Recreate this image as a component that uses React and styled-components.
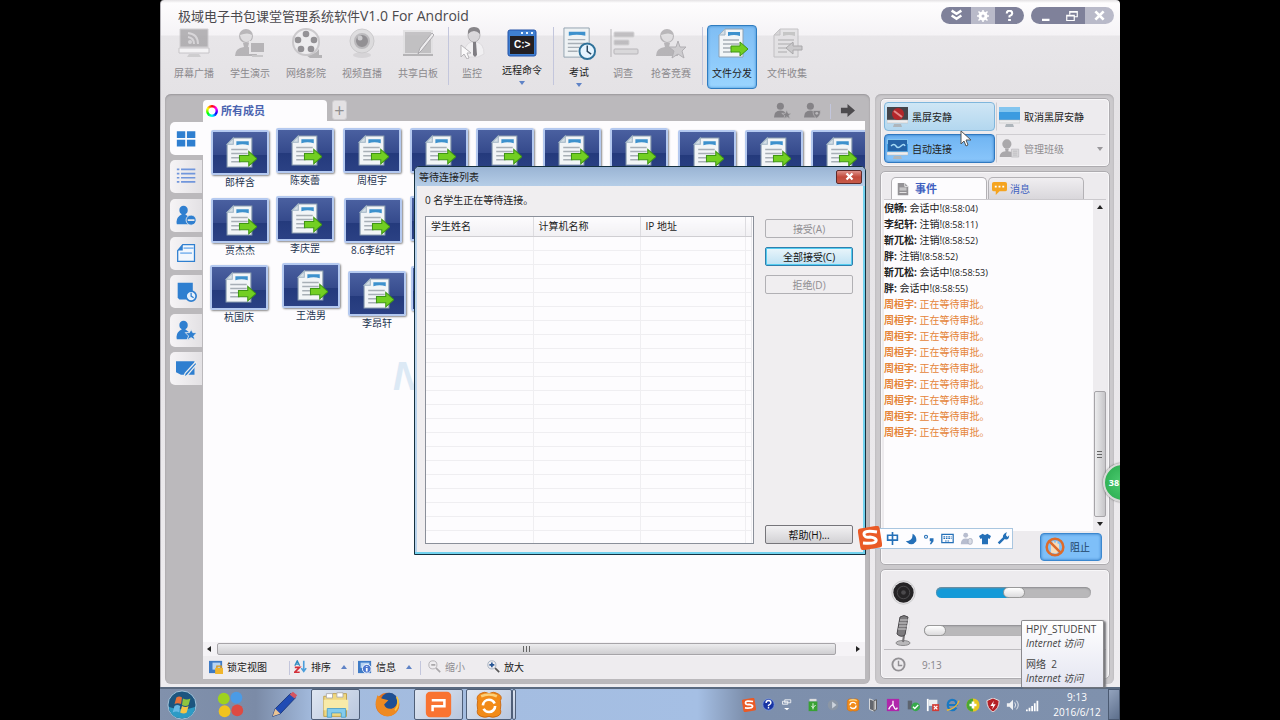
import React, { useState } from 'react';
import styled, { createGlobalStyle } from 'styled-components';

const GlobalStyle = createGlobalStyle`
  * {
    box-sizing: border-box;
  }

  body {
    margin: 0;
    background: #000;
    font-family: 'Open Sans', 'Noto Sans CJK SC', sans-serif;
    font-size: 10px;
    line-height: 14px;
    color: #222;
  }

  button {
    font: inherit;
    color: inherit;
    padding: 0;
    margin: 0;
    border: 0;
    background: none;
    white-space: nowrap;
  }

  svg {
    display: block;
    flex: none;
  }
`;

const Screen = styled.div`
  min-height: 100vh;
  display: flex;
  justify-content: center;
  background: #000;
`;

const Desktop = styled.div`
  position: relative;
  width: 75%;
  min-width: 940px;
  display: flex;
  flex-direction: column;
  overflow: hidden;
`;

const AppWindow = styled.div`
  flex: 1;
  display: flex;
  flex-direction: column;
  padding: 0 6px 3px 4px;
  background: linear-gradient(#e4e2e4 0, #fefdfe 3px, #f5f3f6 35px, #e8e6e9 36px, #e4e2e5 94px, #efedf0 100%);
  border-left: 1px solid #b5b3b8;
  border-radius: 4px 4px 0 0;
`;

const TitleBar = styled.header`
  display: flex;
  align-items: center;
  height: 25px;
  padding: 6px 0 0 13px;
`;

const Title = styled.h1`
  flex: 1;
  margin: 0;
  font-size: 13px;
  font-weight: 400;
  line-height: 18px;
  color: #4b494d;
`;

const TitleLatin = styled.span`
  font-size: 14px;
`;

const Pill = styled.div`
  display: flex;
  height: 17px;
  margin-left: 7px;
  border-radius: 9px;
  overflow: hidden;
`;

const PillButton = styled.button`
  display: flex;
  align-items: center;
  justify-content: center;
  width: ${(p) => p.$width || 28}px;
  background: ${(p) => (p.$light ? '#b9bac9' : '#7f819a')};
`;

const Toolbar = styled.nav`
  display: flex;
  height: 64px;
  margin-bottom: 5px;
  padding-left: 1px;
`;

const ToolButton = styled.button`
  display: flex;
  flex-direction: column;
  align-items: center;
  width: ${(p) => p.$width || 56}px;
  padding-top: 1px;
  gap: ${(p) => (p.$menu ? 4 : 7)}px;
  color: ${(p) => (p.$enabled ? '#222' : '#8b898d')};
  border: 1px solid ${(p) => (p.$selected ? '#2f7cc0' : 'transparent')};
  border-radius: 4px;
  background: ${(p) => (p.$selected ? 'linear-gradient(#7fbdf3, #8fcbfb 60%, #9ad5ff)' : 'none')};
  box-shadow: ${(p) => (p.$selected ? 'inset 0 0 3px #3c8ad0' : 'none')};

  svg {
    opacity: ${(p) => (p.$enabled ? 1 : 0.8)};
  }
`;

const Caret = styled.span`
  border: 3px solid transparent;
  ${(p) => (p.$up ? 'border-bottom' : 'border-top')}: 4px solid ${(p) => p.$color || '#5f83c6'};
  ${(p) => (p.$up ? 'border-top' : 'border-bottom')}: 0;
`;

const Separator = styled.span`
  width: 1px;
  height: ${(p) => p.$height || 58}px;
  margin: 2px ${(p) => p.$gap || 0}px 0;
  background: #c3c6dc;
`;

const Body = styled.main`
  flex: 1;
  display: flex;
  gap: 5px;
`;

const LeftPanel = styled.section`
  flex: 1;
  min-width: 0;
  display: flex;
  flex-direction: column;
  padding: 0 5px 5px;
  border-radius: 6px;
  background: #bbb9bc;
  box-shadow: inset 0 1px 2px #98969a;
`;

const TabStrip = styled.div`
  display: flex;
  align-items: flex-end;
  height: 27px;
  padding: 0 10px 0 33px;
`;

const MembersTab = styled.button`
  display: flex;
  align-items: center;
  gap: 3px;
  width: 124px;
  height: 21px;
  padding-left: 3px;
  font-size: 11px;
  font-weight: 700;
  color: #4a63b0;
  background: #fdfcfe;
  border-radius: 4px 4px 0 0;
`;

const ColorRing = styled.span`
  width: 12px;
  height: 12px;
  border-radius: 50%;
  background: radial-gradient(#fff 0 3px, transparent 4px), conic-gradient(red, #f0f, blue, cyan, lime, yellow, red);
`;

const AddTab = styled.button`
  width: 15px;
  height: 20px;
  margin: 0 auto 1px 5px;
  font-size: 18px;
  line-height: 18px;
  color: #8f8e90;
  background: #e3e1e3;
  border: 1px solid #cfcdd0;
  border-radius: 3px;
`;

const StripTools = styled.div`
  display: flex;
  align-items: center;
  gap: 9px;
  height: 22px;
`;

const StripPeople = styled.div`
  display: flex;
  gap: 13px;
`;

const PanelMain = styled.div`
  flex: 1;
  display: flex;
`;

const SideTabs = styled.div`
  display: flex;
  flex-direction: column;
  justify-content: space-between;
  width: 33px;
  height: 264px;
  padding-top: 1px;
`;

const SideTab = styled.button`
  display: flex;
  align-items: center;
  justify-content: center;
  height: 33px;
  margin-right: ${(p) => (p.$active ? 0 : 1)}px;
  border-radius: 5px 0 0 5px;
  background: ${(p) => (p.$active ? '#fdfcfe' : 'linear-gradient(90deg, #f6f4f6, #e3e1e4)')};
`;

const PanelContent = styled.div`
  flex: 1;
  min-width: 0;
  display: flex;
  flex-direction: column;
`;

const Canvas = styled.div`
  flex: 1;
  position: relative;
  overflow: hidden;
  background: #fdfcfe;
`;

const Watermark = styled.div`
  position: absolute;
  left: 190px;
  top: 230px;
  font: italic 900 40px/50px 'Liberation Sans', sans-serif;
  color: #dce9f5;
`;

const Student = styled.figure`
  position: absolute;
  left: ${(p) => p.$x}px;
  top: ${(p) => p.$y}px;
  width: 58px;
  margin: 0;
  text-align: center;
  color: #1d3450;
`;

const Thumb = styled.div`
  display: flex;
  align-items: center;
  justify-content: center;
  height: 45px;
  border: 2px solid #b4c9f0;
  border-radius: 2px;
  background: linear-gradient(#4a60a0, #354a8c 55%, #243a7c 56%, #2b4184);
  box-shadow: 1px 1px 2px #888;
`;

const HScroll = styled.div`
  display: flex;
  align-items: center;
  justify-content: space-between;
  height: 14px;
  padding: 0 5px 0 4px;
  background: #f5f3f6;
`;

const HThumb = styled.div`
  flex: 1;
  display: flex;
  align-items: center;
  justify-content: center;
  gap: 2px;
  height: 12px;
  margin: 0 20px 0 6px;
  border: 1px solid #a6a4a8;
  border-radius: 2px;
  background: linear-gradient(#ececee, #cfced1);

  i {
    width: 1px;
    height: 6px;
    background: #666;
  }
`;

const ArrowSide = styled.span`
  border: 3px solid transparent;
  ${(p) => (p.$left ? 'border-right' : 'border-left')}: 4px solid #222;
  ${(p) => (p.$left ? 'border-left' : 'border-right')}: 0;
`;

const ViewBar = styled.div`
  display: flex;
  align-items: center;
  height: 23px;
  padding: 0 0 2px 6px;
  background: #eeecef;
`;

const ViewButton = styled.button`
  display: flex;
  align-items: center;
  gap: 4px;
  width: ${(p) => p.$width}px;
  color: ${(p) => (p.disabled ? '#8f8d91' : '#222')};

  ${Caret} {
    margin-left: 6px;
  }
`;

const RightPanel = styled.aside`
  width: 239px;
  display: flex;
  flex-direction: column;
  gap: 4px;
  padding: 4px 4px 5px 5px;
  border-radius: 6px;
  background: #cbc9cc;
  box-shadow: inset 0 1px 2px #aaa8ac;
`;

const Card = styled.div`
  border: 1px solid #aeacb0;
  border-radius: 5px;
  background: ${(p) => p.$bg || '#edebee'};
  box-shadow: inset 0 0 0 1px #f8f7f9;
`;

const QuickGrid = styled(Card)`
  display: grid;
  grid-template-columns: 111px 1fr;
  gap: 3px 1px;
  height: 69px;
  padding: 3px;
`;

const quickBackgrounds = {
  hover: 'linear-gradient(#cfe6f5, #b3d7ef)',
  active: 'linear-gradient(#6fb4f2, #8ac6fb)',
};

const QuickButton = styled.button`
  display: flex;
  align-items: center;
  gap: 4px;
  padding-left: 2px;
  color: ${(p) => (p.disabled ? '#8f8d91' : '#222')};
  border: 1px solid ${(p) => (p.$tone === 'active' ? '#2f78c0' : p.$tone ? '#7fb6dc' : 'transparent')};
  border-radius: 4px;
  background: ${(p) => quickBackgrounds[p.$tone] || 'none'};
  box-shadow: ${(p) => (p.$tone === 'active' ? 'inset 0 0 3px #2f78c0' : 'none')};

  &:nth-child(even) {
    border-left-color: #cfcdd1;
    border-radius: 0;
  }

  &:nth-child(4) {
    border-top-color: #cfcdd1;
  }

  ${Caret} {
    margin: 0 2px 0 auto;
  }
`;

const EventCard = styled(Card)`
  flex: 1;
  display: flex;
  flex-direction: column;
  padding: 5px 3px 3px;
`;

const EventTabs = styled.div`
  display: flex;
  gap: 1px;
  padding-left: 7px;
  border-bottom: 1px solid #cbc9cd;
`;

const EventTab = styled.button`
  display: flex;
  align-items: center;
  gap: ${(p) => (p.$active ? 5 : 3)}px;
  width: 96px;
  height: 22px;
  padding-left: ${(p) => (p.$active ? 4 : 3)}px;
  font-size: ${(p) => (p.$active ? 11 : 10)}px;
  font-weight: ${(p) => (p.$active ? 700 : 400)};
  color: #405fc0;
  border: 1px solid #b3b1b5;
  border-bottom: 0;
  border-radius: 5px 5px 0 0;
  background: ${(p) => (p.$active ? '#fdfcfe' : 'linear-gradient(#f0eef1, #d9d7db)')};
`;

const LogArea = styled.div`
  flex: 1;
  display: flex;
  background: #fdfcfe;
`;

const Log = styled.ul`
  flex: 1;
  margin: 0;
  padding: 0;
  list-style: none;
`;

const LogLine = styled.li`
  height: 16px;
  line-height: 16px;
  white-space: nowrap;
  color: ${(p) => (p.$waiting ? '#e5853a' : '#222')};

  b {
    font-weight: 700;
  }

  time {
    font-size: 9px;
    line-height: 9px;
  }
`;

const VScroll = styled.div`
  display: flex;
  flex-direction: column;
  align-items: center;
  width: 13px;
  padding: 5px 0;
  background: #eeecef;
`;

const VThumb = styled.div`
  display: flex;
  flex-direction: column;
  align-items: center;
  justify-content: center;
  gap: 2px;
  width: 12px;
  height: 126px;
  margin: auto 0 5px;
  border: 1px solid #a6a4a8;
  border-radius: 2px;
  background: linear-gradient(90deg, #ececee, #c6c5c8);

  i {
    width: 5px;
    height: 1px;
    background: #666;
  }
`;

const BlockRow = styled.div`
  display: flex;
  justify-content: flex-end;
  height: 30px;
  padding: 2px 4px 0 0;
`;

const BlockButton = styled.button`
  display: flex;
  align-items: center;
  gap: 5px;
  width: 62px;
  padding-left: 4px;
  color: #1e4466;
  border: 1px solid #3b87cf;
  border-radius: 4px;
  background: #7ebff8;
  box-shadow: inset 0 0 3px #2f78c0;
`;

const AudioCard = styled(Card)`
  height: 110px;
  padding: 3px 3px 0;
`;

const AudioRow = styled.label`
  display: flex;
  align-items: center;
  gap: ${(p) => p.$gap}px;
  height: 38px;
  padding: 0 15px 0 7px;
`;

const Slider = styled.input`
  flex: 1;
  min-width: 0;
  appearance: none;
  height: 11px;
  margin: 0;
  border-radius: 6px;
  box-shadow: inset 0 1px 2px #8a8a8d;

  &::-webkit-slider-thumb {
    appearance: none;
    width: 22px;
    height: 11px;
    border: 1px solid #999;
    border-radius: 6px;
    background: linear-gradient(#fff, #dcdbdd);
  }
`;

const ClockRow = styled.div`
  display: flex;
  align-items: center;
  gap: 16px;
  height: 30px;
  padding-left: 7px;
  color: #88868a;
  border-top: 1px solid #bebcc0;
`;

const Dialog = styled.section`
  position: absolute;
  left: 254px;
  top: 166px;
  width: 452px;
  border: 1px solid #14303f;
  border-radius: 5px 5px 0 0;
  background: #f0eef0;
  box-shadow: inset -2px -2px 0 #72d2ee, inset 2px 0 0 #b9d3ec;
`;

const DialogTitle = styled.header`
  display: flex;
  align-items: center;
  justify-content: space-between;
  height: 19px;
  padding: 0 3px 0 4px;
  border-radius: 4px 4px 0 0;
  background: linear-gradient(#9ab4d4, #b5cde7);

  h2 {
    margin: 0;
    font-size: 10px;
    font-weight: 400;
  }
`;

const CloseButton = styled.button`
  display: flex;
  align-items: center;
  justify-content: center;
  width: 26px;
  height: 14px;
  border: 1px solid #5e2a2a;
  border-radius: 2px;
  background: linear-gradient(#dd9088, #c24a3c 50%, #c75a48);
`;

const DialogBody = styled.div`
  display: grid;
  grid-template-columns: 329px 88px;
  gap: 9px 11px;
  padding: 7px 10px 10px;
`;

const Waiting = styled.p`
  grid-column: 1 / 3;
  margin: 0;
`;

const TableFrame = styled.div`
  height: 328px;
  overflow: hidden;
  border: 1px solid #8a8f99;
  background: #fdfcfe;
`;

const WaitTable = styled.table`
  width: 326px;
  table-layout: fixed;
  border-collapse: collapse;

  th {
    height: 19px;
    padding: 0 5px;
    font-weight: 400;
    text-align: left;
    border-right: 1px solid #dddce0;
    border-bottom: 1px solid #cfced2;
    background: linear-gradient(#fdfcfe, #f1f0f3);
  }

  td {
    height: 14px;
    padding: 0;
    border-right: 1px solid #efeef1;
    border-bottom: 1px solid #efeef1;
  }
`;

const DialogButtons = styled.div`
  display: flex;
  flex-direction: column;
  gap: 9px;
  padding-top: 3px;
`;

const DialogButton = styled.button`
  height: 19px;
  color: ${(p) => (p.disabled ? '#8f8d91' : '#111')};
  border: 1px solid ${(p) => (p.$focus ? '#2f7fae' : p.disabled ? '#b1b0b4' : '#76757a')};
  border-radius: 2px;
  background: ${(p) =>
    p.disabled ? '#f0eef0' : p.$focus ? 'linear-gradient(#eaf5fb, #bfe2f3)' : 'linear-gradient(#f2f1f3, #d2d1d4)'};
  box-shadow: ${(p) => (p.$focus ? 'inset 0 0 0 1px #55cdf0' : 'none')};

  &:last-child {
    margin-top: auto;
  }
`;

const ImeBar = styled.div`
  position: absolute;
  left: 712px;
  top: 528px;
  display: flex;
  align-items: center;
  gap: 6px;
  width: 141px;
  height: 21px;
  padding-left: 13px;
  border: 1px solid #a9c6e0;
  background: #fdfdff;
`;

const ImeLogo = styled.div`
  position: absolute;
  left: -15px;
  top: -3px;
`;

const SpeedBall = styled.button`
  position: absolute;
  right: -22px;
  top: 463px;
  width: 39px;
  height: 39px;
  padding-right: 17px;
  font-size: 9px;
  font-weight: 700;
  color: #fff;
  border: 2px solid #d9d9d9;
  border-radius: 50%;
  background: radial-gradient(#4ccb70, #28a94c);
  box-shadow: 0 0 2px #555;
`;

const Pointer = styled.svg`
  position: absolute;
  left: 800px;
  top: 130px;
`;

const NetworkTip = styled.div`
  position: absolute;
  right: 16px;
  bottom: 33px;
  width: 83px;
  height: 67px;
  padding: 1px 4px 0;
  color: #444;
  border: 1px solid #8a898d;
  border-bottom: 0;
  border-radius: 2px 2px 0 0;
  background: linear-gradient(#fff, #e4e5f1);
  box-shadow: 2px 1px 2px #77777a;

  p {
    margin: 0 0 7px;
    white-space: nowrap;
  }
`;

const Taskbar = styled.footer`
  display: flex;
  align-items: center;
  height: 33px;
  border-top: 2px solid #5a6a80;
  background: linear-gradient(90deg, #8191ac, #7b8ba7 10%, #a3bbde 16%, #a5bfe4 56%, #7d8fac 61%, #7f91ad);
`;

const TaskButton = styled.button`
  display: flex;
  align-items: center;
  justify-content: center;
  width: ${(p) => p.$width || 51}px;
  height: 31px;
  border: 1px solid ${(p) => (p.$open ? '#4f5f78' : 'transparent')};
  border-radius: 2px;
  background: ${(p) => (p.$open ? 'linear-gradient(135deg, #dfe6f1, #b9c7de)' : 'none')};
`;

const Tray = styled.div`
  display: flex;
  align-items: center;
  gap: 6px;
  margin-left: auto;
`;

const TrayGap = styled.span`
  width: ${(p) => p.$width}px;
`;

const TrayClock = styled.div`
  width: 58px;
  margin: 0 -4px 0 2px;
  font-size: 10px;
  line-height: 15px;
  text-align: center;
  color: #fff;
`;

const ShowDesktop = styled.button`
  width: 12px;
  height: 31px;
  border: 1px solid #4b5a72;
  background: linear-gradient(135deg, #93a3bd, #5d6f8c);
`;

const Svg = ({ size = 32, w, h, box = 32, children }) => (
  <svg width={w || size} height={h || size} viewBox={`0 0 ${box} ${box}`} fill="none" aria-hidden="true">
    {children}
  </svg>
);

const DocShape = ({ gray }) => (
  <>
    <path d="M3 8 9 2H27V30H3Z" fill={gray ? '#e2e1e3' : '#f2f5f7'} stroke={gray ? '#b8b7ba' : '#8da0b2'} />
    <path d="M3 8 9 2V8Z" fill={gray ? '#cfced0' : '#d5dfe6'} stroke={gray ? '#b8b7ba' : '#a0b4c4'} />
    <path d="M12 5h12v4q-6-2-12 0z" fill={gray ? '#bbb' : '#3d91cd'} />
    <path d="M7 13h16M7 17h16M7 21h12M7 25h9" stroke={gray ? '#b5b4b6' : '#a7afb6'} strokeWidth="1.4" />
  </>
);

const SendIcon = ({ size }) => (
  <Svg size={size}>
    <DocShape />
    <path d="M15 19h9v-4l8 7-8 7v-4h-9z" fill="#72cf22" stroke="#3f9614" />
  </Svg>
);

const CollectIcon = () => (
  <Svg>
    <DocShape gray />
    <path d="M31 19h-9v-4l-7 6 7 6v-4h9z" fill="#c4c3c5" stroke="#9b9a9c" />
  </Svg>
);

const BroadcastIcon = () => (
  <Svg>
    <path d="M2 2h28v18H2z" fill="#a6a4a7" stroke="#cac8cb" />
    <path d="M1 21h30v5H1z" fill="#f8f7f9" stroke="#c0bec1" />
    <path d="M11 27h10l2 3H9z" fill="#c9c8ca" />
    <path d="M10 6q10 1 10 11M10 10q6 1 6 7" stroke="#d3d1d4" strokeWidth="2" />
    <circle cx="12" cy="15" r="2" fill="#d3d1d4" />
  </Svg>
);

const PersonShape = ({ fill = '#aaa8ab' }) => (
  <>
    <path d="M1 29q0-8 9-9l-1-4h6l-1 4q9 1 9 9z" fill={fill} />
    <circle cx="12" cy="9" r="7" fill={fill} />
  </>
);

const DemoIcon = () => (
  <Svg>
    <PersonShape />
    <path d="M6 8q8-3 12 0 0 7-6 7-5-1-6-7" fill="#dddcde" />
    <path d="M16 15h15v11H16z" fill="#aaa8ab" stroke="#e7e6e8" strokeWidth="2" />
    <path d="M18 29h11" stroke="#c1c0c2" strokeWidth="2" />
  </Svg>
);

const FilmIcon = () => (
  <Svg>
    <path d="M16 28q9 0 13-6v6h3v3H20z" fill="#a9a8aa" />
    <circle cx="16" cy="15" r="13" fill="#efeef0" stroke="#c3c1c4" strokeWidth="2" />
    <g fill="#7e7c80">
      <circle cx="16" cy="7" r="3.3" />
      <circle cx="8" cy="13" r="3.3" />
      <circle cx="24" cy="13" r="3.3" />
      <circle cx="11" cy="22" r="3.3" />
      <circle cx="21" cy="22" r="3.3" />
    </g>
  </Svg>
);

const CamIcon = () => (
  <Svg>
    <ellipse cx="16" cy="28" rx="9" ry="3" fill="#d3d1d4" />
    <circle cx="16" cy="14" r="12" fill="#dad9db" stroke="#c5c4c6" />
    <circle cx="16" cy="14" r="7" fill="#7d7b7f" stroke="#b0afb2" strokeWidth="2" />
    <circle cx="14" cy="11" r="2.5" fill="#c7c6c9" />
  </Svg>
);

const BoardIcon = () => (
  <Svg>
    <path d="M2 4h28v23H2z" fill="#b8b7b9" stroke="#e0dfe1" strokeWidth="2" />
    <path d="M1 28h30" stroke="#a9a8aa" strokeWidth="2" />
    <path d="M16 27l2-6L30 6l2 2-12 15z" fill="#efeef0" stroke="#9d9b9f" />
  </Svg>
);

const MonitorIcon = () => (
  <Svg>
    <path d="M8 30q0-13 7-15h6q7 2 7 12l-6 3z" fill="#f4f3f5" stroke="#dcdadd" />
    <ellipse cx="18" cy="8" rx="6" ry="7" fill="#d5d3d6" stroke="#a9a7ab" />
    <path d="M12 7q-1-7 6-7t6 7q-3-3-6-3t-6 3" fill="#6d6b6f" />
    <path d="M17 15h3l1 13-2 2-2-2z" fill="#67656a" />
    <path d="M5 18v12l3-3 3 5 2-1-2-5h4z" fill="#fff" stroke="#aaa8ac" />
  </Svg>
);

const CommandIcon = () => (
  <Svg>
    <rect x="2" y="3" width="28" height="26" rx="2" fill="#3f7fd0" stroke="#2452a8" />
    <path d="M4 9h24v18H4z" fill="#231f22" />
    <path d="M15 6h2M20 6h2M25 6h2" stroke="#e8f4ff" strokeWidth="2" />
    <text x="8" y="21" fontSize="10" fontWeight="700" fontFamily="Liberation Sans, sans-serif" fill="#fff">C:&gt;</text>
  </Svg>
);

const ExamIcon = () => (
  <svg width="34" height="34" viewBox="0 0 35 35" fill="none" aria-hidden="true">
    <path d="M2 1h26v30H2z" fill="#eef2f4" stroke="#93a3af" />
    <path d="M7 5h17v4q-9-2-17 0z" fill="#3d91cd" />
    <path d="M6 13h18M6 17h18M6 21h12M6 25h10" stroke="#a7afb6" strokeWidth="1.4" />
    <circle cx="26" cy="25" r="8" fill="#e5f4ff" stroke="#2e7199" strokeWidth="2" />
    <path d="M26 19v6l4 3" stroke="#2c4860" strokeWidth="1.5" />
  </svg>
);

const SurveyIcon = () => (
  <Svg>
    <path d="M4 2v28" stroke="#aaa8ab" />
    <g fill="#b5b3b6" stroke="#cfced0">
      <rect x="7" y="5" width="20" height="5" rx="1" />
      <rect x="7" y="13" width="15" height="5" rx="1" />
      <rect x="7" y="22" width="24" height="5" rx="1" fill="#d6d5d7" stroke="#adabaf" />
    </g>
  </Svg>
);

const QuizIcon = () => (
  <Svg>
    <PersonShape />
    <path d="M6 8q8-3 12 0 0 7-6 7-5-1-6-7" fill="#dddcde" />
    <path d="m23 14 2 6h6l-4 4 2 7-6-4-6 4 2-7-5-4h7z" fill="#c8c7ca" stroke="#a4a2a6" />
  </Svg>
);

const ScreenIcon = ({ kind }) => (
  <svg width="21" height="22" viewBox="0 0 21 22" aria-hidden="true">
    <path d="M0 1h21v13H0z" fill={kind === 'black' ? '#44444a' : '#3c9be0'} />
    {kind !== 'black' && <path d="M0 1h21v5H0z" fill="#83c5ef" />}
    <path d="M0 14h21v3H0z" fill="#eeeef0" stroke="#bbb" strokeWidth=".5" />
    <path d="M7 18h7l1 3H6z" fill="#aeb5bb" />
    {kind === 'black' && <circle cx="11" cy="8" r="6" fill="#b2262a" />}
    {kind === 'black' && <path d="m7 5 8 6" stroke="#e28a8a" strokeWidth="2" />}
    {kind === 'auto' && <path d="M1 2h19v11H1z" fill="#2564a8" />}
    {kind === 'auto' && <path d="M4 8q3-3 5 0t5 0 4 0" fill="none" stroke="#a5daf5" strokeWidth="1.5" />}
  </svg>
);

const SmallPerson = ({ fill, badge }) => (
  <Svg size={17} box={24}>
    <circle cx="9" cy="6" r="5" fill={fill} />
    <path d="M0 22q0-10 9-10t9 10z" fill={fill} />
    {badge === 'star' && <path d="m18 11 2 5h5l-4 3 2 5-5-3-4 3 1-5-4-3h5z" fill={fill} stroke="#bbb9bc" />}
    {badge === 'shield' && <path d="M18 23q-6-4-5-11h10q1 7-5 11" fill={fill} stroke="#bbb9bc" />}
    {badge === 'shield' && <circle cx="18" cy="16" r="2" fill="#bbb9bc" />}
  </Svg>
);

const BLUE = '#2f7fd0';

const sideIcons = {
  grid: <path d="M1 4h10v8H1zM13 4h10v8H13zM1 14h10v8H1zM13 14h10v8H13z" fill={BLUE} />,
  list: (
    <path
      d="M1 4h3M1 9h3M1 14h3M1 19h3M6 4h17M6 9h17M6 14h17M6 19h17"
      stroke="#7196dc"
      strokeWidth="2"
    />
  ),
  userMinus: (
    <>
      <path d="M4 6a5 5 0 1 1 10 0q0 4-3 5l5 4v8H1q-2-8 6-12-3-1-3-5" fill={BLUE} />
      <circle cx="18" cy="18" r="6" fill={BLUE} stroke="#eee" />
      <path d="M14 18h8" stroke="#eee" strokeWidth="2" />
    </>
  ),
  doc: (
    <>
      <path d="M2 9 8 2h14v20H2z" fill="#f2f7fd" stroke={BLUE} strokeWidth="1.5" />
      <path d="M2 9 8 2v7z" fill={BLUE} />
      <path d="M9 6h12M5 12h14" stroke="#8abcf0" strokeWidth="2" />
    </>
  ),
  bookClock: (
    <>
      <path d="M2 2h18v20H4l-2-2z" fill={BLUE} />
      <circle cx="18" cy="18" r="6" fill="#e8f1fb" stroke={BLUE} strokeWidth="2" />
      <path d="M18 14v4l3 2" stroke={BLUE} strokeWidth="1.5" />
    </>
  ),
  userStar: (
    <>
      <path d="M4 6a5 5 0 1 1 10 0q0 4-3 5l5 4v8H1q-2-8 6-12-3-1-3-5" fill={BLUE} />
      <path d="m18 11 2 4h5l-4 4 2 5-5-3-5 3 2-5-4-4h5z" fill={BLUE} stroke="#eee" />
    </>
  ),
  pen: (
    <>
      <path d="M0 4h22v16H6l-6-3z" fill={BLUE} />
      <path d="m9 23 2-5L23 5l2 2-12 14z" fill={BLUE} stroke="#eee" strokeWidth="1.5" />
    </>
  ),
};

const SogouIcon = ({ size }) => (
  <Svg size={size} box={24}>
    <rect x="1" y="1" width="22" height="22" rx="3" fill="#ea5a26" transform="rotate(-9 12 12)" />
    <path d="M19 6q-13-2-13 2t6 3q7 1 6 4t-13 2" stroke="#fff" strokeWidth="3" />
  </Svg>
);

const OrangeIcon = ({ size }) => (
  <Svg size={size}>
    <path
      d="M6 3q5-3 10 0 5-3 10 0 6 3 3 8 1 5 0 10 2 6-4 8-5 2-9 0-5 2-9 0-6-2-4-8-1-5 0-10-2-5 3-8"
      fill="#f28b18"
      stroke="#c9650c"
    />
    <path d="M7 6q9-4 18 0" stroke="#fbd07a" strokeWidth="3" />
    <circle cx="16" cy="17" r="7" stroke="#fff" strokeWidth="3" strokeDasharray="18 4" />
  </Svg>
);

const tools = [
  { label: '屏幕广播', icon: <BroadcastIcon /> },
  { label: '学生演示', icon: <DemoIcon /> },
  { label: '网络影院', icon: <FilmIcon /> },
  { label: '视频直播', icon: <CamIcon /> },
  { label: '共享白板', icon: <BoardIcon />, sep: 2 },
  { label: '监控', icon: <MonitorIcon />, width: 42 },
  { label: '远程命令', icon: <CommandIcon />, width: 58, menu: true, enabled: true, sep: 2 },
  { label: '考试', icon: <ExamIcon />, width: 46, menu: true, enabled: true },
  { label: '调查', icon: <SurveyIcon />, width: 42 },
  { label: '抢答竞赛', icon: <QuizIcon />, width: 54, sep: 4 },
  { label: '文件分发', icon: <SendIcon />, width: 50, enabled: true, selected: true },
  { label: '文件收集', icon: <CollectIcon />, width: 60 },
];

const students = [
  { name: '郎梓含', x: 8, y: 9 },
  { name: '陈奕蕾', x: 73, y: 7 },
  { name: '周桓宇', x: 140, y: 7 },
  { name: '', x: 207, y: 7 },
  { name: '', x: 273, y: 7 },
  { name: '', x: 340, y: 7 },
  { name: '', x: 407, y: 7 },
  { name: '', x: 475, y: 9 },
  { name: '', x: 542, y: 9 },
  { name: '', x: 608, y: 9 },
  { name: '贾杰杰', x: 8, y: 77 },
  { name: '李庆罡', x: 73, y: 75 },
  { name: '8.6李纪轩', x: 141, y: 77 },
  { name: '', x: 207, y: 75 },
  { name: '杭国庆', x: 7, y: 144 },
  { name: '王浩男', x: 79, y: 142 },
  { name: '李昂轩', x: 145, y: 150 },
  { name: '', x: 208, y: 145 },
];

const events = [
  { name: '倪畅', text: '会话中!', time: '(8:58:04)' },
  { name: '李纪轩', text: '注销!', time: '(8:58:11)' },
  { name: '靳兀松', text: '注销!', time: '(8:58:52)' },
  { name: '胖', text: '注销!', time: '(8:58:52)' },
  { name: '靳兀松', text: '会话中!', time: '(8:58:53)' },
  { name: '胖', text: '会话中!', time: '(8:58:55)' },
  ...Array.from({ length: 9 }, () => ({ name: '周桓宇', text: '正在等待审批。', waiting: true })),
];

const sliderFill = (value) => ({
  background: `linear-gradient(90deg, #149ad8 ${value}%, #b9b8ba ${value}%)`,
});

const Header = () => (
  <TitleBar>
    <Title>
      极域电子书包课堂管理系统软件<TitleLatin>V1.0 For Android</TitleLatin>
    </Title>
    <Pill>
      <PillButton $width={30} aria-label="收起">
        <Svg size={13} box={16}>
          <path d="m2 2 6 4 6-4M2 8l6 4 6-4" stroke="#fff" strokeWidth="3" />
        </Svg>
      </PillButton>
      <PillButton $width={24} $light aria-label="设置">
        <Svg size={12} box={16}>
          <circle cx="8" cy="8" r="4" stroke="#fff" strokeWidth="4" />
          <path d="M8 0v16M0 8h16M2 2l12 12M14 2 2 14" stroke="#fff" strokeWidth="2" />
          <circle cx="8" cy="8" r="2" fill="#b9bac9" />
        </Svg>
      </PillButton>
      <PillButton $width={29} aria-label="帮助">
        <Svg size={11} box={16}>
          <path d="M4 5q0-4 4-4t4 4q0 2-4 4v2" stroke="#fff" strokeWidth="3" />
          <path d="M6 13h4v3H6z" fill="#fff" />
        </Svg>
      </PillButton>
    </Pill>
    <Pill>
      <PillButton aria-label="最小化">
        <Svg size={12} box={16}>
          <path d="M4 13h10" stroke="#fff" strokeWidth="3" />
        </Svg>
      </PillButton>
      <PillButton $width={26} aria-label="还原">
        <Svg size={12} box={16}>
          <path d="M5 6V2h10v7h-4M1 7h10v7H1zM1 8h10M5 3h10" stroke="#fff" strokeWidth="1.6" />
        </Svg>
      </PillButton>
      <PillButton $width={29} $light aria-label="关闭">
        <Svg size={11} box={16}>
          <path d="m2 2 12 12M14 2 2 14" stroke="#fff" strokeWidth="4" />
        </Svg>
      </PillButton>
    </Pill>
  </TitleBar>
);

const Members = () => (
  <LeftPanel>
    <TabStrip>
      <MembersTab>
        <ColorRing />
        所有成员
      </MembersTab>
      <AddTab aria-label="添加">+</AddTab>
      <StripTools>
        <StripPeople>
          <SmallPerson fill="#858387" badge="star" />
          <SmallPerson fill="#858387" badge="shield" />
        </StripPeople>
        <Separator $height={15} />
        <Svg w={15} h={15} box={16}>
          <path d="M1 5h7V1l8 7-8 7v-4H1z" fill="#4d4b4e" />
        </Svg>
      </StripTools>
    </TabStrip>
    <PanelMain>
      <SideTabs>
        {Object.keys(sideIcons).map((key) => (
          <SideTab key={key} $active={key === 'grid'} aria-label={key}>
            <Svg size={21} box={25}>{sideIcons[key]}</Svg>
          </SideTab>
        ))}
      </SideTabs>
      <PanelContent>
        <Canvas>
          <Watermark>N</Watermark>
          {students.map((s) => (
            <Student key={`${s.x}-${s.y}`} $x={s.x} $y={s.y}>
              <Thumb>
                <SendIcon size={33} />
              </Thumb>
              <figcaption>{s.name}</figcaption>
            </Student>
          ))}
        </Canvas>
        <HScroll>
          <ArrowSide $left />
          <HThumb>
            <i />
            <i />
            <i />
          </HThumb>
          <ArrowSide />
        </HScroll>
        <ViewBar>
          <ViewButton $width={76}>
            <Svg size={14} box={16}>
              <path d="M0 1h15v14H0z" fill="#3d7ac6" />
              <path d="M4 3h9v8H4z" fill="#b7d4f3" />
              <path d="M7 9h9v7H7z" fill="#f0b52c" />
              <path d="M9 9V7h5v2" stroke="#d8961c" strokeWidth="1.5" />
            </Svg>
            锁定视图
          </ViewButton>
          <Separator $height={14} $gap={4} />
          <ViewButton $width={55}>
            <Svg size={13} box={16}>
              <path d="m1 7 3-6 3 6M2 5h4" stroke="#2d8bc0" strokeWidth="1.6" />
              <path d="M1 9h6l-6 6h6" stroke="#d3303a" strokeWidth="2" />
              <path d="M12 1v13m-3-4 3 4 3-4" stroke="#4b9edb" strokeWidth="2" />
            </Svg>
            排序
            <Caret $up />
          </ViewButton>
          <Separator $height={14} $gap={4} />
          <ViewButton $width={55}>
            <Svg size={14} box={16}>
              <path d="M0 1h15v14H0z" fill="#3d7ac6" />
              <path d="M3 3h10v6H3z" fill="#b7d4f3" />
              <circle cx="10" cy="10" r="5" fill="#4c77cf" stroke="#fff" />
              <path d="M10 7v1m0 1v4" stroke="#fff" strokeWidth="2" />
            </Svg>
            信息
            <Caret $up />
          </ViewButton>
          <Separator $height={14} $gap={7} />
          <ViewButton $width={59} disabled>
            <Svg size={13} box={16}>
              <circle cx="6" cy="6" r="5" stroke="#aaa8ab" />
              <path d="M4 6h5M10 10l5 5" stroke="#aaa8ab" strokeWidth="2" />
            </Svg>
            缩小
          </ViewButton>
          <ViewButton $width={60}>
            <Svg size={13} box={16}>
              <circle cx="6" cy="6" r="5" stroke="#9aa8b8" />
              <path d="M3 6h6M6 3v6" stroke="#245494" strokeWidth="2" />
              <path d="m10 10 5 5" stroke="#555" strokeWidth="2" />
            </Svg>
            放大
          </ViewButton>
        </ViewBar>
      </PanelContent>
    </PanelMain>
  </LeftPanel>
);

const Sidebar = () => {
  const [volume, setVolume] = useState(50);
  const [mic, setMic] = useState(0);

  return (
    <RightPanel>
      <QuickGrid>
        <QuickButton $tone="hover">
          <ScreenIcon kind="black" />
          黑屏安静
        </QuickButton>
        <QuickButton>
          <ScreenIcon />
          取消黑屏安静
        </QuickButton>
        <QuickButton $tone="active">
          <ScreenIcon kind="auto" />
          自动连接
        </QuickButton>
        <QuickButton disabled>
          <Svg size={21}>
            <PersonShape />
            <path d="M19 17h11v12H19z" fill="#dddcde" stroke="#b6b4b8" />
            <path d="M21 20h7m-7 3h7m-7 3h7" stroke="#aaa8ac" />
          </Svg>
          管理班级
          <Caret $color="#9a989c" />
        </QuickButton>
      </QuickGrid>
      <EventCard>
        <EventTabs>
          <EventTab $active>
            <Svg size={14} box={16}>
              <path d="M2 1h8l4 4v10H2z" fill="#949296" />
              <path d="M10 1v4h4M4 7h8M4 9h8M4 12h8" stroke="#eee" />
            </Svg>
            事件
          </EventTab>
          <EventTab>
            <Svg size={15} box={16}>
              <path d="M2 1h12q2 0 2 2v6q0 2-2 2H8l-4 4v-4H2q-2 0-2-2V3q0-2 2-2" fill="#f5a420" />
              <path d="M3 6h2m2 0h2m2 0h2" stroke="#fff" strokeWidth="2" />
            </Svg>
            消息
          </EventTab>
        </EventTabs>
        <LogArea>
          <Log>
            {events.map((e, i) => (
              <LogLine key={i} $waiting={e.waiting}>
                <b>{e.name}:</b> {e.text}
                {e.time && <time>{e.time}</time>}
              </LogLine>
            ))}
          </Log>
          <VScroll>
            <Caret $up $color="#222" />
            <VThumb>
              <i />
              <i />
              <i />
            </VThumb>
            <Caret $color="#222" />
          </VScroll>
        </LogArea>
        <BlockRow>
          <BlockButton>
            <Svg size={20} box={24}>
              <path d="M7 19V8h2V5h2v2h2V5h2v3h2v8l-3 4z" fill="#f6dcbb" />
              <circle cx="12" cy="12" r="10" stroke="#dd6b2b" strokeWidth="3" />
              <path d="m5 5 14 14" stroke="#dd6b2b" strokeWidth="3" />
            </Svg>
            阻止
          </BlockButton>
        </BlockRow>
      </EventCard>
      <AudioCard>
        <AudioRow $gap={20}>
          <Svg size={25}>
            <circle cx="16" cy="16" r="15" fill="#e6e5e7" stroke="#c4c3c5" />
            <circle cx="16" cy="16" r="13" fill="#252325" />
            <circle cx="16" cy="16" r="8" stroke="#555356" />
            <circle cx="16" cy="16" r="3" fill="#4b494c" />
          </Svg>
          <Slider
            type="range"
            aria-label="音量"
            value={volume}
            onChange={(e) => setVolume(+e.target.value)}
            style={sliderFill(volume)}
          />
        </AudioRow>
        <AudioRow $gap={8}>
          <svg width="25" height="31" viewBox="0 0 25 31" aria-hidden="true">
            <ellipse cx="12" cy="28" rx="7" ry="2.5" fill="#b9b8ba" stroke="#8b8a8c" />
            <path d="m12 27 1-7" stroke="#777578" strokeWidth="2" />
            <path d="M9 2q4-3 8 0l-3 18q-4 3-8-1z" fill="#7c7a7d" stroke="#49474a" />
            <path d="M9 5h8M8 8h8M8 11h8M7 14h8" stroke="#cfced0" />
            <path d="M18 3q2 9-3 17" fill="none" stroke="#e2e1e3" />
          </svg>
          <Slider
            type="range"
            aria-label="麦克风"
            value={mic}
            onChange={(e) => setMic(+e.target.value)}
            style={sliderFill(mic)}
          />
        </AudioRow>
        <ClockRow>
          <Svg size={15} box={16}>
            <circle cx="8" cy="8" r="6.5" stroke="#929094" strokeWidth="2" />
            <path d="M8 4v5h4" stroke="#929094" strokeWidth="1.5" />
          </Svg>
          9:13
        </ClockRow>
      </AudioCard>
    </RightPanel>
  );
};

const WaitingDialog = () => (
  <Dialog role="dialog" aria-label="等待连接列表">
    <DialogTitle>
      <h2>等待连接列表</h2>
      <CloseButton aria-label="关闭">
        <Svg size={9} box={12}>
          <path d="m2 2 8 8M10 2l-8 8" stroke="#fff" strokeWidth="3" />
        </Svg>
      </CloseButton>
    </DialogTitle>
    <DialogBody>
      <Waiting>0 名学生正在等待连接。</Waiting>
      <TableFrame>
        <WaitTable>
          <colgroup>
            <col width="107" />
            <col width="107" />
            <col width="105" />
            <col />
          </colgroup>
          <thead>
            <tr>
              <th>学生姓名</th>
              <th>计算机名称</th>
              <th>IP 地址</th>
              <th aria-label="空" />
            </tr>
          </thead>
          <tbody>
            {Array.from({ length: 22 }, (_, i) => (
              <tr key={i}>
                <td />
                <td />
                <td />
                <td />
              </tr>
            ))}
          </tbody>
        </WaitTable>
      </TableFrame>
      <DialogButtons>
        <DialogButton disabled>接受(A)</DialogButton>
        <DialogButton $focus>全部接受(C)</DialogButton>
        <DialogButton disabled>拒绝(D)</DialogButton>
        <DialogButton>帮助(H)...</DialogButton>
      </DialogButtons>
    </DialogBody>
  </Dialog>
);

const Ime = () => (
  <ImeBar>
    <ImeLogo>
      <SogouIcon size={24} />
    </ImeLogo>
    <Svg size={13} box={16}>
      <path d="M2 4h12v6H2zM8 0v16" stroke="#2470b8" strokeWidth="2" />
    </Svg>
    <Svg size={12} box={16}>
      <path d="M10 1q1 9-9 10 8 8 14 0 1-7-5-10" fill="#2470b8" />
    </Svg>
    <Svg size={12} box={16}>
      <circle cx="4" cy="5" r="2" stroke="#2470b8" strokeWidth="1.5" />
      <path d="M9 7h5v4l-3 4H9l2-4H9z" fill="#2470b8" />
    </Svg>
    <Svg size={13} box={16}>
      <path d="M1 3h14v10H1z" stroke="#2470b8" strokeWidth="1.5" />
      <path d="M3 6h10M3 8h10M5 11h6" stroke="#2470b8" strokeWidth="1.3" strokeDasharray="2 1" />
    </Svg>
    <Svg size={13} box={16}>
      <circle cx="7" cy="4" r="3" fill="#b7bdcf" />
      <path d="M1 15q0-7 6-7t6 7z" fill="#b7bdcf" />
      <rect x="10" y="8" width="5" height="7" rx="2" fill="#d9dde7" stroke="#a4aabd" />
    </Svg>
    <Svg size={12} box={16}>
      <path d="M5 1q3 3 6 0l5 3-2 4-2-1v8H4V7L2 8 0 4z" fill="#2470b8" />
    </Svg>
    <Svg size={13} box={16}>
      <path d="m2 14 8-8" stroke="#2470b8" strokeWidth="3" />
      <path d="M15 4q0 6-5 5Q5 6 9 2l3-2-1 4 2 2z" fill="#2470b8" />
    </Svg>
  </ImeBar>
);

const Start = () => (
  <Svg size={30}>
    <circle cx="16" cy="16" r="15" fill="#1c557f" stroke="#abcbe0" />
    <path d="M2 18q14 5 28 0-2 12-14 12T2 18" fill="#2d9bc5" />
    <path d="M10 8q3-2 6 0l-1 7q-4-2-7 0z" fill="#e6703a" />
    <path d="M17 9q4 2 8 0l-2 7q-3 2-7 0z" fill="#8ec63f" />
    <path d="M8 17q3-2 6 0l-1 7q-3-2-7 0z" fill="#68b9e5" />
    <path d="M16 17q4 2 7 0l-2 7q-3 2-7 0z" fill="#f6c544" />
  </Svg>
);

const TrayIcons = () => (
  <Tray>
    <SogouIcon size={14} />
    <Svg size={13} box={16}>
      <circle cx="8" cy="8" r="7" fill="#1733a3" stroke="#7e9be0" />
      <path d="M5 6q0-3 3-3t3 3q0 1-3 3v1m0 1v2" stroke="#fff" strokeWidth="1.7" />
    </Svg>
    <Svg size={12} box={16}>
      <path d="M5 1h8v4H5zM2 3h7v4H2z" fill="#8898b3" stroke="#fff" />
      <path d="M4 12h7l-3 3z" fill="#fff" />
    </Svg>
    <TrayGap $width={1} />
    <Svg size={14} box={16}>
      <path d="M4 1h8v3H4z" fill="#ddd" />
      <path d="M3 4h10v11H3z" fill="#38a232" />
      <path d="M8 6v7M6 9l2 2 3-3" stroke="#fff" />
    </Svg>
    <Svg size={14} box={16}>
      <circle cx="8" cy="8" r="6" fill="#8b96a5" />
      <path d="m7 4 5 4-5 4z" fill="#ccd3dc" />
    </Svg>
    <OrangeIcon size={14} />
    <Svg size={14} box={16}>
      <path d="m4 1 5 2v12l-5-2z" fill="#62666d" stroke="#e3e3e3" />
      <path d="m9 3 3-1v11l-3 2z" fill="#ccc" stroke="#555" />
    </Svg>
    <Svg size={14} box={16}>
      <path d="M1 1h14v14H1z" fill="#b026ab" />
      <path d="M8 3v5M3 13q4-8 6-3t4 1" stroke="#fff" strokeWidth="1.5" />
    </Svg>
    <Svg size={14} box={16}>
      <path d="M2 3h5v10H2z" fill="#5d646f" />
      <circle cx="11" cy="10" r="5" fill="#36a94b" />
      <path d="m8 10 2 2 4-4" stroke="#fff" strokeWidth="1.5" />
    </Svg>
    <Svg size={14} box={16}>
      <path d="M2 1v14" stroke="#fff" strokeWidth="2" />
      <path d="M3 2h10v7H3z" fill="#e9ecef" />
      <path d="M7 7h8v8H7z" fill="#d33c35" />
      <path d="m9 9 4 4m0-4-4 4" stroke="#fff" strokeWidth="1.5" />
    </Svg>
    <Svg size={14} box={16}>
      <path d="M12 11q-2 3-5 3-5-1-5-6t5-6q5 0 5 6H3" stroke="#1979c3" strokeWidth="2.5" />
      <path d="M1 14Q12 12 15 3" stroke="#edb82e" strokeWidth="1.5" />
    </Svg>
    <Svg size={14} box={16}>
      <circle cx="8" cy="8" r="7.5" fill="#e7c71e" />
      <path d="M8 .5a7.5 7.5 0 0 0 0 15z" fill="#49a832" />
      <path d="M8 4v8M4 8h8" stroke="#fff" strokeWidth="3" />
    </Svg>
    <Svg size={14} box={16}>
      <path d="m8 0 7 3q0 9-7 13Q1 12 1 3z" fill="#b52127" stroke="#eee" />
      <path d="m9 3-4 6h3l-1 4 4-6H8z" fill="#fff" />
    </Svg>
    <Svg size={14} box={16}>
      <path d="M1 6h3l4-4v12l-4-4H1z" fill="#eef0f3" />
      <path d="M10 5q2 3 0 6m2-8q4 5 0 10" stroke="#eef0f3" />
    </Svg>
    <Svg size={14} box={16}>
      <path d="M1 13v2M4 11v4M7 9v6M10 6v9M13 3v12" stroke="#fff" strokeWidth="2" />
    </Svg>
    <TrayClock>
      9:13
      <br />
      2016/6/12
    </TrayClock>
    <ShowDesktop aria-label="显示桌面" />
  </Tray>
);

const App = () => (
  <Screen>
    <GlobalStyle />
    <Desktop>
      <AppWindow>
        <Header />
        <Toolbar>
          {tools.map((t) => (
            <React.Fragment key={t.label}>
              <ToolButton $width={t.width} $menu={t.menu} $enabled={t.enabled} $selected={t.selected}>
                {t.icon}
                {t.label}
                {t.menu && <Caret />}
              </ToolButton>
              {t.sep && <Separator $gap={t.sep} />}
            </React.Fragment>
          ))}
        </Toolbar>
        <Body>
          <Members />
          <Sidebar />
        </Body>
      </AppWindow>
      <Taskbar>
        <TaskButton $width={44} aria-label="开始">
          <Start />
        </TaskButton>
        <TaskButton $width={53} aria-label="小球">
          <Svg size={27}>
            <circle cx="8" cy="9" r="7" fill="#9ed21e" />
            <circle cx="23" cy="8" r="7" fill="#4b9be6" />
            <circle cx="9" cy="24" r="7" fill="#f0c31e" />
            <circle cx="24" cy="23" r="7" fill="#dd4a42" />
          </Svg>
        </TaskButton>
        <TaskButton $width={54} aria-label="画笔">
          <Svg size={27}>
            <path d="m2 30 3-9L23 3l6 5-18 19z" fill="#214cb4" stroke="#153277" />
            <path d="m2 30 3-9 6 6z" fill="#eac493" />
            <path d="m22 4 4-3 5 4-3 4z" fill="#d65560" />
          </Svg>
        </TaskButton>
        <TaskButton $open $width={49} aria-label="资源管理器">
          <Svg size={28}>
            <path d="M2 6h8l2-3h16v26H2z" fill="#f0d880" stroke="#bd9c45" />
            <path d="M5 3h7v5H5zM17 2h7v5h-7z" fill="#fff" stroke="#aaa" />
            <path d="M2 10h28v12H2z" fill="#f8eaa8" />
            <path d="M6 30V20h21v10h-5v-5H11v5z" fill="#82cbed" stroke="#4c9fc8" />
          </Svg>
        </TaskButton>
        <TaskButton $width={54} aria-label="浏览器">
          <Svg size={27}>
            <circle cx="16" cy="16" r="14" fill="#e4701c" />
            <circle cx="18" cy="12" r="10" fill="#1e4f94" />
            <path d="M2 13 4 5l5 4 8 2-5 5q2 6 9 5 8-2 6-13 6 10-1 18-10 8-19 0-5-5-5-13" fill="#ee8a22" />
            <path d="M27 7q4 9-2 16" stroke="#f7c540" strokeWidth="2" />
          </Svg>
        </TaskButton>
        <TaskButton $open $width={49} aria-label="演示">
          <Svg size={27}>
            <rect x="1" y="1" width="30" height="30" rx="5" fill="#f97331" />
            <path d="M8 11h15v7H9v6" stroke="#fff" strokeWidth="3" />
          </Svg>
        </TaskButton>
        <TrayGap $width={3} />
        <TaskButton $open $width={46} aria-label="课堂管理">
          <OrangeIcon size={28} />
        </TaskButton>
        <TaskButton $open $width={4} aria-label="更多窗口" />
        <TrayIcons />
      </Taskbar>
      <WaitingDialog />
      <SpeedBall>38</SpeedBall>
      <Ime />
      <Pointer width="12" height="18" viewBox="0 0 12 18" aria-hidden="true">
        <path d="M1 1v13l3-3 2 5 2-1-2-5h5z" fill="#fff" stroke="#555" />
      </Pointer>
      <NetworkTip role="tooltip">
        <p>
          HPJY_STUDENT
          <br />
          <em>Internet 访问</em>
        </p>
        <p>
          网络&nbsp; 2
          <br />
          <em>Internet 访问</em>
        </p>
      </NetworkTip>
    </Desktop>
  </Screen>
);

export default App;
